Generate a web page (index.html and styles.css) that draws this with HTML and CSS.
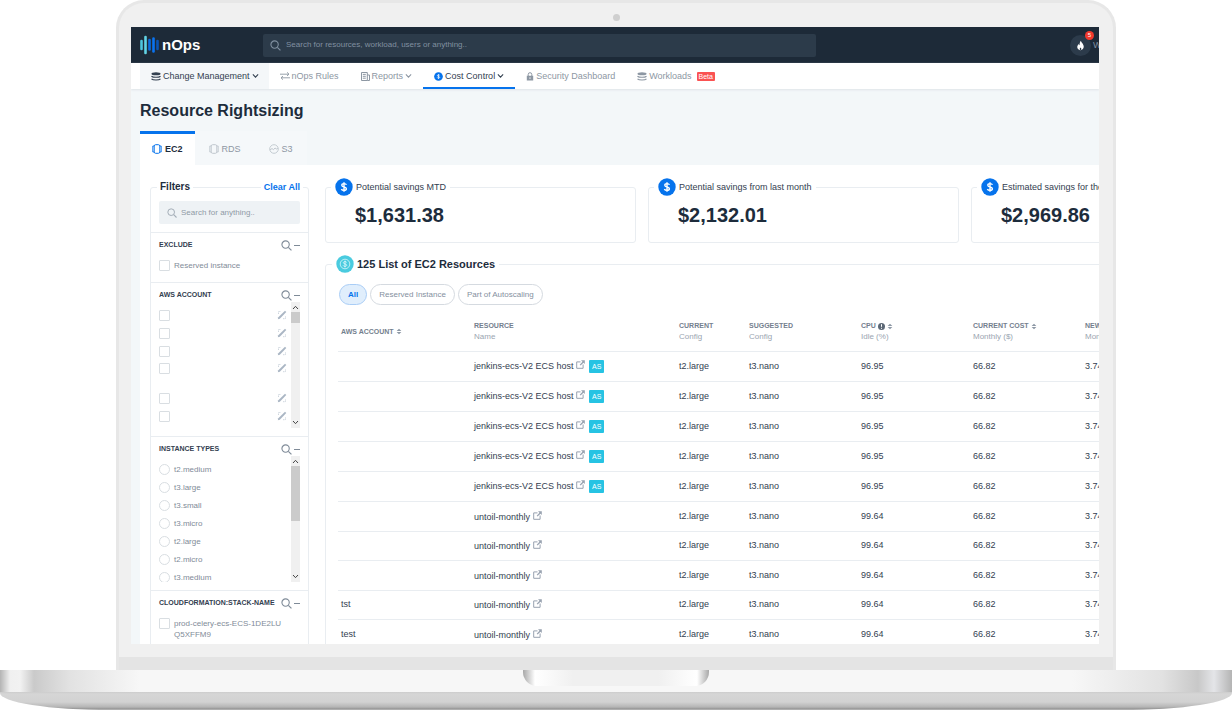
FILE: index.html
```html
<!DOCTYPE html>
<html lang="en">
<head>
<meta charset="utf-8">
<title>nOps - Resource Rightsizing</title>
<link rel="stylesheet" href="styles.css">
</head>
<body>
<svg class="defs" aria-hidden="true">
  <symbol id="search" viewBox="0 0 12 12"><circle cx="5" cy="5" r="4" fill="none" stroke="currentColor" stroke-width="1.2"/><path d="M8 8l3.400 3.400" stroke="currentColor" stroke-width="1.300"/></symbol>
  <symbol id="stack" viewBox="0 0 10 9"><ellipse cx="5" cy="1.700" rx="4.500" ry="1.500" fill="currentColor"/><path d="M.5 4.200C2 5.600 8 5.600 9.500 4.200M.5 6.800C2 8.400 8 8.400 9.500 6.800" fill="none" stroke="currentColor" stroke-width="1.200"/></symbol>
  <symbol id="chev" viewBox="0 0 8 6"><path d="M1 1.200L4 4.400 7 1.200" fill="none" stroke="currentColor" stroke-width="1.200"/></symbol>
  <symbol id="dollar" viewBox="0 0 18 18"><circle cx="9" cy="9" r="8.700" fill="#0673ec"/><path d="M11.500 6.800C11 5.800 10 5.600 9 5.600c-1.300 0-2.200.6-2.200 1.600 0 2.500 4.600 1.100 4.600 3.600 0 1-1 1.600-2.400 1.600-1.200 0-2.200-.4-2.600-1.500M9 4.300v9.400" fill="none" stroke="#fff" stroke-width="1.400"/></symbol>
  <symbol id="chip" viewBox="0 0 10 10"><rect x="2.200" y=".7" width="5.600" height="8.600" rx="1.400" fill="none" stroke="currentColor"/><path d="M2.200 2H.8v6h1.400M7.800 2h1.400v6H7.800" fill="none" stroke="currentColor" stroke-width=".9"/></symbol>
  <symbol id="pen" viewBox="0 0 10 10"><path d="M.8 9.200l.5-2L8 .7l1.300 1.300L2.800 8.700z" fill="#aab6c4"/><path d="M1.500 4V1.500H4M6 8.700h2.500V6" fill="none" stroke="#c3ccd6" stroke-width=".8" stroke-dasharray="1.500 .8"/></symbol>
  <symbol id="ext" viewBox="0 0 9 9"><path d="M4.500 1.900H.7v6.400h6.400V4.500" fill="none" stroke="#98a2b0"/><path d="M5 .2h3.800V4L7.500 2.800 4.600 5.600l-.9-.9 2.800-2.900z" fill="#98a2b0"/></symbol>
  <symbol id="sort" viewBox="0 0 6 8"><path d="M3 .8L5.700 3.500H.3zM3 7.200L.3 4.500h5.400z" fill="#8d98a5"/></symbol>
</svg>

<div class="laptop">
  <div class="lid">
    <div class="camera"></div>
    <div class="screen">
      <header class="topbar">
        <a class="logo" href="#">
          <svg width="20" height="20" viewBox="0 0 20 20" aria-hidden="true"><g stroke-linecap="round" stroke-width="2.600"><path d="M1.500 6v8" stroke="#4cc5dd"/><path d="M5.500 2v16" stroke="#62d3e4"/><path d="M9.500 5v9.500" stroke="#0a6ce0"/><path d="M13.500 3.500v13" stroke="#0a73f0"/><path d="M17.500 6v8" stroke="#0b55b5"/></g></svg>
          <span>nOps</span>
        </a>
        <label class="top-search">
          <svg width="11" height="11" aria-hidden="true"><use href="#search"/></svg>
          <input type="text" aria-label="Search" placeholder="Search for resources, workload, users or anything..">
        </label>
        <div class="user">
          <button class="flame" type="button" aria-label="Notifications">
            <svg width="9" height="11" viewBox="0 0 10 12" aria-hidden="true"><path d="M5.400.6C6 2.800 9 4.500 8.600 7.800 8.300 10 6.800 11.200 5 11.200S1.600 10 1.400 8C1.300 6.300 2.200 5.400 3 4.300c.2.800.5 1.100 1 1.400C3.900 3.800 4.200 2 5.400.6z" fill="#fff"/><path d="M5 8.300c.7.800.9 1.100.9 1.600S5.500 11 5 11s-.9-.6-.9-1.100S4.500 9 5 8.300z" fill="#2c3b4b"/></svg>
            <span class="count">5</span>
          </button>
          <span>W</span>
        </div>
      </header>

      <nav class="menu">
        <a class="menu-item shaded" href="#"><svg width="10" height="9" aria-hidden="true"><use href="#stack"/></svg>Change Management<svg width="7" height="6" aria-hidden="true"><use href="#chev"/></svg></a>
        <a class="menu-item" href="#"><svg width="10" height="8" viewBox="0 0 10 8" aria-hidden="true"><path d="M0 2.200h9M7 .3l2 1.900-2 1.700M10 5.800H1M3 4.100L1 5.800l2 1.900" fill="none" stroke="currentColor" stroke-width=".9"/></svg>nOps Rules</a>
        <a class="menu-item" href="#"><svg width="9" height="9" viewBox="0 0 9 9" aria-hidden="true"><path d="M.5.5h5.800v8H.5zM6.300 3h2.200v5.500H6.300M1.800 2.400h3M1.800 4.300h3M1.800 6.200h3" fill="none" stroke="currentColor"/></svg>Reports<svg width="7" height="6" aria-hidden="true"><use href="#chev"/></svg></a>
        <a class="menu-item current" href="#"><svg width="9" height="9" aria-hidden="true"><use href="#dollar"/></svg>Cost Control<svg width="7" height="6" aria-hidden="true"><use href="#chev"/></svg></a>
        <a class="menu-item" href="#"><svg width="8" height="9" viewBox="0 0 8 9" aria-hidden="true"><path d="M2.200 4V2.500a1.800 1.800 0 0 1 3.600 0V4" fill="none" stroke="currentColor"/><path d="M.8 3.800h6.400v4.700H.8zM3.600 5.200v1.900h.8V5.200z" fill="currentColor" fill-rule="evenodd"/></svg>Security Dashboard</a>
        <a class="menu-item" href="#"><svg width="10" height="9" aria-hidden="true"><use href="#stack"/></svg>Workloads<span class="beta">Beta</span></a>
      </nav>

      <main class="page">
        <h1>Resource Rightsizing</h1>
        <div class="tabs">
          <button class="tab active" type="button"><svg width="10" height="10" aria-hidden="true"><use href="#chip"/></svg>EC2</button>
          <button class="tab" type="button"><svg width="10" height="10" aria-hidden="true"><use href="#chip"/></svg>RDS</button>
          <button class="tab" type="button"><svg width="10" height="10" viewBox="0 0 10 10" aria-hidden="true"><circle cx="5" cy="5" r="4.300" fill="none" stroke="currentColor" stroke-width=".9"/><path d="M1 6l2-1.500 1.500 1.200L6 4l1.500 1L9 4" fill="none" stroke="currentColor"/></svg>S3</button>
        </div>

        <div class="panel">
          <aside class="filters">
            <div class="filters-head"><h2>Filters</h2><a href="#">Clear All</a></div>
            <label class="filter-search">
              <svg width="10" height="10" aria-hidden="true"><use href="#search"/></svg>
              <input type="text" aria-label="Search filters" placeholder="Search for anything..">
            </label>

            <section class="group">
              <div class="group-head"><h3>EXCLUDE</h3><svg width="11" height="11" aria-hidden="true"><use href="#search"/></svg><i class="minus"></i></div>
              <div class="options">
                <label class="option"><input type="checkbox">Reserved instance</label>
              </div>
            </section>

            <section class="group">
              <div class="group-head"><h3>AWS ACCOUNT</h3><svg width="11" height="11" aria-hidden="true"><use href="#search"/></svg><i class="minus"></i></div>
              <div class="scroller">
                <div class="options">
                  <div class="option"><input type="checkbox" aria-label="Account 1"><svg width="10" height="10" aria-hidden="true"><use href="#pen"/></svg></div>
                  <div class="option"><input type="checkbox" aria-label="Account 2"><svg width="10" height="10" aria-hidden="true"><use href="#pen"/></svg></div>
                  <div class="option"><input type="checkbox" aria-label="Account 3"><svg width="10" height="10" aria-hidden="true"><use href="#pen"/></svg></div>
                  <div class="option tall"><input type="checkbox" aria-label="Account 4"><svg width="10" height="10" aria-hidden="true"><use href="#pen"/></svg></div>
                  <div class="option"><input type="checkbox" aria-label="Account 5"><svg width="10" height="10" aria-hidden="true"><use href="#pen"/></svg></div>
                  <div class="option"><input type="checkbox" aria-label="Account 6"><svg width="10" height="10" aria-hidden="true"><use href="#pen"/></svg></div>
                </div>
                <div class="bar"><svg class="up" width="7" height="5" aria-hidden="true"><use href="#chev"/></svg><i class="thumb small"></i><svg width="7" height="5" aria-hidden="true"><use href="#chev"/></svg></div>
              </div>
            </section>

            <section class="group">
              <div class="group-head"><h3>INSTANCE TYPES</h3><svg width="11" height="11" aria-hidden="true"><use href="#search"/></svg><i class="minus"></i></div>
              <div class="scroller">
                <div class="options">
                  <label class="option"><input type="radio" name="type">t2.medium</label>
                  <label class="option"><input type="radio" name="type">t3.large</label>
                  <label class="option"><input type="radio" name="type">t3.small</label>
                  <label class="option"><input type="radio" name="type">t3.micro</label>
                  <label class="option"><input type="radio" name="type">t2.large</label>
                  <label class="option"><input type="radio" name="type">t2.micro</label>
                  <label class="option"><input type="radio" name="type">t3.medium</label>
                </div>
                <div class="bar"><svg class="up" width="7" height="5" aria-hidden="true"><use href="#chev"/></svg><i class="thumb large"></i><svg width="7" height="5" aria-hidden="true"><use href="#chev"/></svg></div>
              </div>
            </section>

            <section class="group">
              <div class="group-head"><h3>CLOUDFORMATION:STACK-NAME</h3><svg width="11" height="11" aria-hidden="true"><use href="#search"/></svg><i class="minus"></i></div>
              <div class="options">
                <label class="option wrap"><input type="checkbox"><span>prod-celery-ecs-ECS-1DE2LU<br>Q5XFFM9</span></label>
              </div>
            </section>
          </aside>

          <div class="content">
            <div class="cards">
              <section class="card"><h2 class="legend"><svg width="18" height="18" aria-hidden="true"><use href="#dollar"/></svg>Potential savings MTD</h2><p class="amount">$1,631.38</p></section>
              <section class="card"><h2 class="legend"><svg width="18" height="18" aria-hidden="true"><use href="#dollar"/></svg>Potential savings from last month</h2><p class="amount">$2,132.01</p></section>
              <section class="card"><h2 class="legend"><svg width="18" height="18" aria-hidden="true"><use href="#dollar"/></svg>Estimated savings for the</h2><p class="amount">$2,969.86</p></section>
            </div>

            <section class="list">
              <h2 class="legend strong"><svg width="18" height="18" viewBox="0 0 18 18" aria-hidden="true"><circle cx="9" cy="9" r="8.700" fill="#4acbdf"/><g fill="none" stroke="#d9f6fa"><circle cx="9" cy="9" r="4.800" stroke-width=".8"/><path d="M10.700 7.400c-.3-.6-.9-.8-1.700-.8-1 0-1.600.4-1.600 1.100 0 1.700 3.300.8 3.300 2.500 0 .7-.7 1.200-1.700 1.200-.9 0-1.600-.3-1.900-1M9 5.600v6.800" stroke-width=".9"/></g></svg>125 List of EC2 Resources</h2>
              <div class="pills">
                <button class="pill on" type="button">All</button>
                <button class="pill" type="button">Reserved Instance</button>
                <button class="pill" type="button">Part of Autoscaling</button>
              </div>
              <table>
                <colgroup><col class="c-account"><col class="c-resource"><col class="c-config"><col class="c-wide"><col class="c-wide"><col class="c-wide"><col></colgroup>
                <thead>
                  <tr>
                    <th>AWS ACCOUNT <svg class="sort" width="6" height="7" aria-hidden="true"><use href="#sort"/></svg></th>
                    <th>RESOURCE<small>Name</small></th>
                    <th>CURRENT<small>Config</small></th>
                    <th>SUGGESTED<small>Config</small></th>
                    <th>CPU <svg width="7" height="7" viewBox="0 0 7 7" aria-hidden="true"><circle cx="3.500" cy="3.500" r="3.500" fill="#5c6876"/><path d="M3.500 1.200v2.600M3.500 4.800v1" stroke="#fff"/></svg> <svg class="sort" width="6" height="7" aria-hidden="true"><use href="#sort"/></svg><small>Idle (%)</small></th>
                    <th>CURRENT COST <svg class="sort" width="6" height="7" aria-hidden="true"><use href="#sort"/></svg><small>Monthly ($)</small></th>
                    <th>NEW COST<small>Monthly ($)</small></th>
                  </tr>
                </thead>
                <tbody>
                  <tr><td></td><td>jenkins-ecs-V2 ECS host <svg class="ext" width="9" height="9" aria-hidden="true"><use href="#ext"/></svg><span class="as">AS</span></td><td>t2.large</td><td>t3.nano</td><td>96.95</td><td>66.82</td><td>3.74</td></tr>
                  <tr><td></td><td>jenkins-ecs-V2 ECS host <svg class="ext" width="9" height="9" aria-hidden="true"><use href="#ext"/></svg><span class="as">AS</span></td><td>t2.large</td><td>t3.nano</td><td>96.95</td><td>66.82</td><td>3.74</td></tr>
                  <tr><td></td><td>jenkins-ecs-V2 ECS host <svg class="ext" width="9" height="9" aria-hidden="true"><use href="#ext"/></svg><span class="as">AS</span></td><td>t2.large</td><td>t3.nano</td><td>96.95</td><td>66.82</td><td>3.74</td></tr>
                  <tr><td></td><td>jenkins-ecs-V2 ECS host <svg class="ext" width="9" height="9" aria-hidden="true"><use href="#ext"/></svg><span class="as">AS</span></td><td>t2.large</td><td>t3.nano</td><td>96.95</td><td>66.82</td><td>3.74</td></tr>
                  <tr><td></td><td>jenkins-ecs-V2 ECS host <svg class="ext" width="9" height="9" aria-hidden="true"><use href="#ext"/></svg><span class="as">AS</span></td><td>t2.large</td><td>t3.nano</td><td>96.95</td><td>66.82</td><td>3.74</td></tr>
                  <tr class="plain"><td></td><td>untoil-monthly <svg class="ext" width="9" height="9" aria-hidden="true"><use href="#ext"/></svg></td><td>t2.large</td><td>t3.nano</td><td>99.64</td><td>66.82</td><td>3.74</td></tr>
                  <tr class="plain"><td></td><td>untoil-monthly <svg class="ext" width="9" height="9" aria-hidden="true"><use href="#ext"/></svg></td><td>t2.large</td><td>t3.nano</td><td>99.64</td><td>66.82</td><td>3.74</td></tr>
                  <tr class="plain"><td></td><td>untoil-monthly <svg class="ext" width="9" height="9" aria-hidden="true"><use href="#ext"/></svg></td><td>t2.large</td><td>t3.nano</td><td>99.64</td><td>66.82</td><td>3.74</td></tr>
                  <tr class="plain"><td>tst</td><td>untoil-monthly <svg class="ext" width="9" height="9" aria-hidden="true"><use href="#ext"/></svg></td><td>t2.large</td><td>t3.nano</td><td>99.64</td><td>66.82</td><td>3.74</td></tr>
                  <tr class="plain"><td>test</td><td>untoil-monthly <svg class="ext" width="9" height="9" aria-hidden="true"><use href="#ext"/></svg></td><td>t2.large</td><td>t3.nano</td><td>99.64</td><td>66.82</td><td>3.74</td></tr>
                </tbody>
              </table>
            </section>
          </div>
        </div>
      </main>
    </div>
    <div class="chin"></div>
  </div>
  <div class="deck"><div class="notch"></div></div>
  <div class="underside"></div>
</div>
</body>
</html>
```
FILE: styles.css
```css
* { box-sizing: border-box; }
body, h1, h2, h3, p { margin: 0; }
body {
  background: #fff;
  color: #1d2c3c;
  font: 9px/12px "Liberation Sans", Arial, sans-serif;
  overflow: hidden;
}
a { color: inherit; text-decoration: none; }
button, input { font: inherit; color: inherit; }
button { border: 0; background: none; padding: 0; }
svg { flex: none; }
.defs { display: none; }

/* Laptop */
.laptop { display: flex; flex-direction: column; height: 100vh; }
.lid {
  flex: 1;
  min-height: 0;
  display: flex;
  flex-direction: column;
  margin: 0 116px;
  border: solid #e7e7e7;
  border-width: 3px 3px 0;
  border-radius: 28px 28px 0 0;
  background: #f0f0f0;
}
.camera { width: 7px; height: 7px; margin: 11px auto 6px; border-radius: 50%; background: #cfcfcf; }
.screen {
  flex: 1;
  min-height: 0;
  overflow: hidden;
  margin: 0 14px 13px 12px;
  background: #f3f7f9;
}
.chin { flex: none; height: 13px; background: #e4e4e4; }
.deck {
  flex: none;
  height: 22px;
  background: linear-gradient(90deg, #b4b4b4 0, #f0f0f0 10px, #f2f2f2 20px, #cacaca 34px, #e2e2e2 70px, #f7f7f7 140px, #f7f7f7 calc(100% - 160px), #e2e2e2 calc(100% - 70px), #c8c8c8 calc(100% - 34px), #e4e5e8 calc(100% - 18px), #b4b4b4 100%);
}
.notch {
  width: 186px;
  height: 16px;
  margin: 0 auto;
  border-radius: 0 0 14px 14px;
  background: linear-gradient(90deg, #a8a8a8 0, #fff 12px, #f0f0f0 50px, #f0f0f0 136px, #fff 174px, #a8a8a8 100%);
}
.underside {
  flex: none;
  height: 18px;
  border-radius: 0 0 110px 110px / 0 0 17px 17px;
  background: linear-gradient(#cccccc 0, #d6d6d6 2px, #d2d2d2 10px, #b5b5b5 15px, #949494 17px, #c8c8c8 18px);
}

/* Top bar */
.topbar { display: flex; align-items: center; height: 36px; padding-left: 9px; background: #1d2a38; color: #fff; }
.logo { display: flex; align-items: center; gap: 2px; width: 123px; font-size: 15px; line-height: 18px; font-weight: bold; }
.top-search {
  flex: 0 1 553px;
  display: flex;
  align-items: center;
  gap: 5px;
  height: 23px;
  padding: 0 7px;
  border-radius: 2px;
  background: #2c3b4a;
  color: #8190a0;
}
input[type="text"] { flex: 1; min-width: 0; padding: 0; border: 0; outline: 0; background: none; font-size: 8px; }
input::placeholder { color: #8190a0; opacity: 1; }
.user { display: flex; align-items: center; gap: 2px; width: 29px; margin-left: auto; color: #8190a0; white-space: nowrap; }
.flame { position: relative; flex: none; display: grid; place-items: center; width: 21px; height: 21px; border-radius: 50%; background: #2c3b4b; }
.count { position: absolute; top: -4px; right: -3px; width: 9px; height: 9px; border-radius: 50%; background: #f2392d; color: #fff; font-size: 6px; line-height: 9px; text-align: center; }

/* Menu */
.menu { display: flex; height: 26px; padding-left: 9px; background: #fff; box-shadow: 0 1px 2px #dfe4e8; position: relative; color: #8d97a3; }
.menu-item { display: flex; align-items: center; gap: 2px; padding: 2px 11px 0; border-bottom: 2px solid transparent; white-space: nowrap; }
.menu-item.shaded { padding-right: 10px; background: #f4f7f9; color: #334050; }
.menu-item.current { border-color: #0673ec; color: #334050; }
.beta { margin-left: 3px; padding: 0 2px; border-radius: 1px; background: #fa5252; color: #fff; font-size: 7px; line-height: 9px; }

/* Page heading and tabs */
.page { padding: 12px 0 0 9px; }
h1 { font-size: 16px; line-height: 20px; white-space: nowrap; }
.tabs { display: flex; margin-top: 10px; }
.tab { display: flex; align-items: center; gap: 3px; height: 34px; padding: 0 14px 2px; border-top: 3px solid transparent; color: #8d97a3; background: #f5f8fa; }
.tab svg { color: #c0c7ce; }
.tab.active { padding: 0 12px 2px; border-color: #0673ec; background: #fff; color: #1d2c3c; font-weight: bold; }
.tab.active svg { color: #0673ec; }

.panel { display: flex; gap: 16px; padding: 22px 0 0 10px; background: #fff; }

/* Filters */
.filters { flex: none; width: 159px; border: 1px solid #e9edf1; border-radius: 3px; color: #7f8b98; font-size: 8px; }
.filters-head { display: flex; justify-content: space-between; height: 12px; margin: -7px 5px 8px 6px; }
.filters-head h2, .filters-head a { padding: 0 3px; background: #fff; }
.filters-head h2 { font-size: 10px; color: #1d2c3c; }
.filters-head a { font-size: 9px; font-weight: bold; color: #0673ec; }
.filter-search { display: flex; align-items: center; gap: 4px; height: 23px; margin: 0 8px 8px; padding: 0 8px; border-radius: 2px; background: #eef2f5; color: #a3adb7; }
.filter-search input::placeholder { color: #8f9aa6; }
.group { border-top: 1px solid #e9edf1; padding: 5px 8px 8px; }
.group-head { display: flex; align-items: center; gap: 2px; height: 14px; color: #7f8b98; }
h3 { flex: 1; font-size: 7px; color: #334050; white-space: nowrap; }
.minus { width: 6px; height: 1px; background: #7f8b98; }
.options { flex: 1; padding-top: 4px; }
.option { display: flex; align-items: center; gap: 4px; height: 18px; line-height: 11px; white-space: nowrap; }
.option.tall { height: 29px; align-items: flex-start; padding-top: 3px; }
.option.wrap { height: auto; align-items: flex-start; padding-top: 4px; }
.option svg { margin-left: auto; }
.option input { appearance: none; flex: none; width: 11px; height: 11px; margin: 0; border: 1px solid #d9dee2; border-radius: 1px; background: #fff; }
.option input[type="radio"] { border-radius: 50%; }
.scroller { display: flex; gap: 4px; height: 126px; overflow: hidden; }
.bar { display: flex; flex-direction: column; align-items: center; width: 9px; padding: 3px 0; background: #f0f0f0; color: #444; }
.bar .up { transform: rotate(180deg); }
.thumb { width: 9px; margin: 2px 0 auto; background: #cbcbcb; }
.thumb.small { height: 11px; }
.thumb.large { height: 55px; }

/* Savings cards */
.content { flex: none; }
.cards { display: grid; grid-template-columns: repeat(3, 311px); gap: 12px; }
.card { height: 56px; }
.card, .list { border: 1px solid #e9edf1; border-radius: 3px; }
.legend { display: flex; align-items: center; gap: 3px; width: max-content; height: 18px; margin: -10px 0 0 5px; padding: 0 4px; background: #fff; font-size: 9px; font-weight: normal; color: #334050; }
.legend.strong { font-size: 11px; font-weight: bold; color: #1d2c3c; }
.amount { margin: 7px 0 0 29px; font-size: 20px; line-height: 24px; font-weight: bold; }

/* Resource list */
.list { margin-top: 21px; padding: 0 12px; }
.list .legend { margin-left: -6px; }
.pills { display: flex; gap: 3px; margin: 11px 0 6px 1px; }
.pill { height: 21px; padding: 0 8px; border: 1px solid #d5dae0; border-radius: 11px; color: #8590a0; font-size: 8px; }
.pill.on { border-color: #a9cdf6; background: #e0eefc; color: #0673ec; font-weight: bold; }
table { width: 100%; table-layout: fixed; border-collapse: separate; border-spacing: 0; }
.c-account { width: 133px; }
.c-resource { width: 205px; }
.c-config { width: 70px; }
.c-wide { width: 112px; }
th, td { padding: 0 3px; border-bottom: 1px solid #e9edf1; text-align: left; vertical-align: middle; white-space: nowrap; }
th { height: 41px; font-size: 7px; line-height: 11px; color: #74808e; }
th small { display: block; font-size: 8px; font-weight: normal; color: #9aa5b1; }
th svg { vertical-align: middle; }
td { height: 30px; padding-bottom: 2px; color: #334050; }
td:nth-child(2) { padding-bottom: 0; }
.plain:nth-child(odd) td { height: 29px; }
.as { display: inline-block; margin-left: 4px; padding: 0 3px; border-radius: 1px; background: #26c3e3; color: #fff; font-size: 7px; line-height: 13px; vertical-align: middle; }
```
